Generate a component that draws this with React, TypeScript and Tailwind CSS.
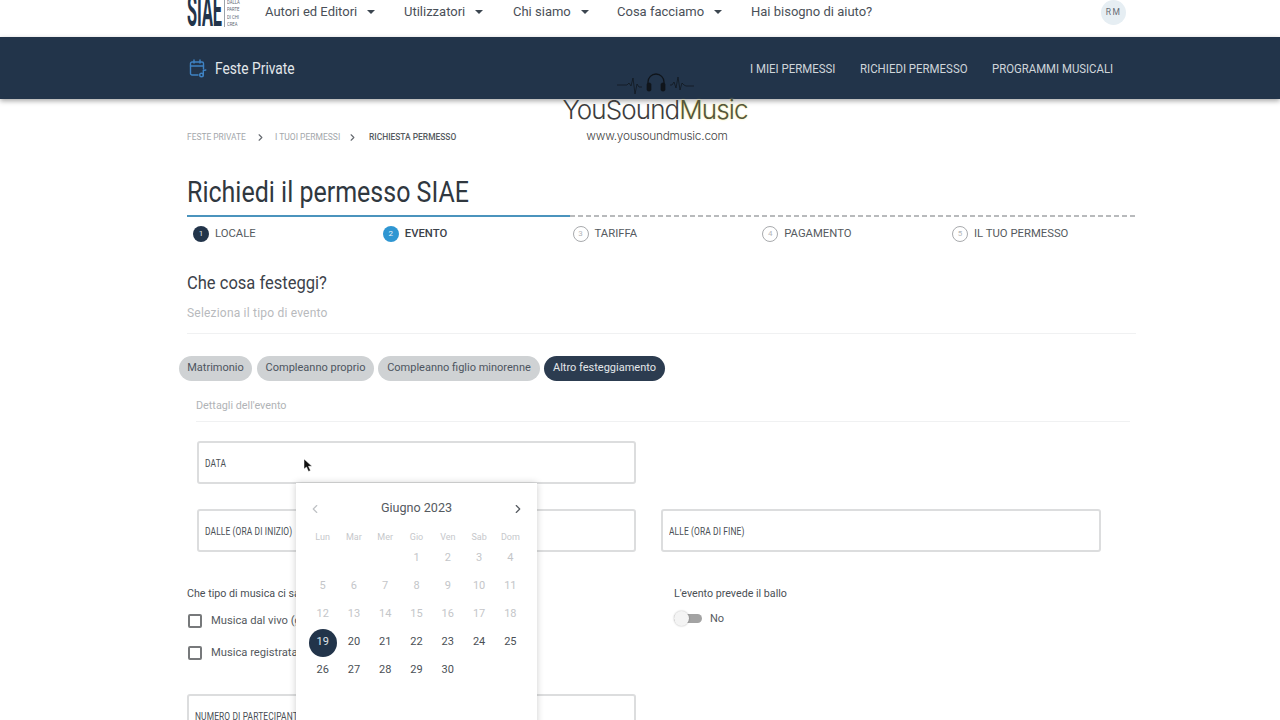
import React from "react";
import { ChevronLeft, ChevronRight } from "lucide-react";

const roboto = "font-['Roboto','Liberation_Sans',sans-serif]";

const topLinks = [
  { label: "Autori ed Editori", w: "w-[139px]" },
  { label: "Utilizzatori", w: "w-[109px]" },
  { label: "Chi siamo", w: "w-[104px]" },
  { label: "Cosa facciamo", w: "w-[134px]" },
];

const steps = [
  { n: 1, label: "LOCALE", state: "done" },
  { n: 2, label: "EVENTO", state: "active" },
  { n: 3, label: "TARIFFA", state: "todo" },
  { n: 4, label: "PAGAMENTO", state: "todo" },
  { n: 5, label: "IL TUO PERMESSO", state: "todo" },
];

const chips = [
  { label: "Matrimonio", w: "mr-[1px] w-[73px]" },
  { label: "Compleanno proprio", w: "w-[117px]" },
  { label: "Compleanno figlio minorenne", w: "w-[162px]" },
];

const dayNames = ["Lun", "Mar", "Mer", "Gio", "Ven", "Sab", "Dom"];
const days: (number | null)[] = [null, null, null, ...Array.from({ length: 30 }, (_, i) => i + 1)];

function Narrow({ children, className = "" }: { children: React.ReactNode; className?: string }) {
  // Roboto Condensed is not installed, so the wide face is squeezed from its left edge
  return <span className={`inline-block origin-left whitespace-nowrap ${className}`}>{children}</span>;
}

function Caret() {
  return <span className="ml-[10px] inline-block h-0 w-0 border-x-[4px] border-t-[4px] border-x-transparent border-t-[#3c4650]" />;
}

function Field({ label, className = "" }: { label: string; className?: string }) {
  return (
    <div className={`flex h-[43px] items-center rounded-[3px] border-2 border-[#dcddde] bg-white pl-[6px] pt-[1px] text-[10px] text-[#4a4f55] ${className}`}>
      <Narrow className="scale-x-[0.84] tracking-[0.15px]">{label}</Narrow>
    </div>
  );
}

function Check({ label }: { label: string }) {
  return (
    <div className="flex h-[15px] items-center">
      <span className="h-[14px] w-[14px] rounded-[2px] border-2 border-[#77797b] bg-white" />
      <span className="ml-[9px] mt-[1px] text-[11.200px] text-[#555a60]">{label}</span>
    </div>
  );
}

function Calendar() {
  return (
    <div className="absolute left-[296px] top-[483px] h-[260px] w-[241px] bg-white px-[11px] pt-[14px] shadow-[0_0_7px_rgba(0,0,0,0.2)]">
      <div className="flex h-[22px] items-center justify-between px-[1px]">
        <ChevronLeft className="mt-[2px] h-[14px] w-[14px] text-[#bfc2c5]" />
        <span className="text-[12.600px] text-[#555a60]">Giugno 2023</span>
        <ChevronRight className="mt-[2px] h-[14px] w-[14px] text-[#555a60]" />
      </div>
      <div className="mt-[12px] grid grid-cols-7 text-center text-[9px] text-[#c6c8cb]">
        {dayNames.map((d) => (
          <span key={d}>{d}</span>
        ))}
      </div>
      <div className="grid grid-cols-7 text-center text-[11px]">
        {days.map((d, i) => (
          <div key={i} className="flex h-[28px] items-center justify-center">
            {d === 19 ? (
              <span className="flex h-[28px] w-[28px] items-center justify-center rounded-full bg-[#22344a] text-[#dfe3e8]">19</span>
            ) : d === null ? null : (
              <span className={d < 19 ? "text-[#c4c6c9]" : "text-[#4a4f55]"}>{d}</span>
            )}
          </div>
        ))}
      </div>
    </div>
  );
}

function Watermark() {
  return (
    <div className="absolute left-[539px] top-[72px] flex w-[232px] flex-col items-center">
      <svg className="ml-[2px]" width="78" height="26" viewBox="0 0 78 26" fill="none" stroke="#10151b" strokeWidth="0.7">
        <path d="M0 13h10l2-2 2 3 2-8 2 16 2-10 2 3h3M53 13h2l2-3 2 6 2-11 2 13 2-7 2 2 2 1h8" />
        <path d="M31 12v-2a8 8 0 0 1 16 0v2" strokeWidth="1.3" />
        <rect x="30" y="11" width="4" height="8" rx="1.500" fill="#10151b" />
        <rect x="44" y="11" width="4" height="8" rx="1.500" fill="#10151b" />
      </svg>
      <div className="-mt-[2px] whitespace-nowrap font-['Inter',sans-serif] text-[26px] font-light leading-[28px] tracking-[-0.9px] text-[#3d3d3d]">
        YouSound<span className="text-[#55553a] [text-shadow:0_0_2px_#e8e27a]">Music</span>
      </div>
      <div className="ml-[4px] mt-[5px] whitespace-nowrap font-['Inter',sans-serif] text-[11.800px] font-light leading-[14px] tracking-[-0.2px] text-[#444]">
        www.yousoundmusic.com
      </div>
    </div>
  );
}

function Cursor() {
  return (
    <svg className="absolute left-[303px] top-[458px]" width="10" height="15" viewBox="0 0 10 15">
      <path d="M1 1v10l2.500-2 2 4.500 2-1-2-4.200H9z" fill="#111" stroke="#fff" strokeWidth="0.5" />
    </svg>
  );
}

function PartyIcon() {
  return (
    <svg width="18" height="19" viewBox="0 0 18 19" fill="none" stroke="#3f83c4" strokeWidth="1.4" strokeLinecap="round">
      <path d="M9 16H3a1.500 1.500 0 0 1-1.500-1.500v-10A1.500 1.500 0 0 1 3 3h10a1.500 1.500 0 0 1 1.500 1.500V10" />
      <path d="M1.500 7h13M5 1v3M11 1v3" />
      <circle cx="12.500" cy="16" r="1.800" />
      <path d="M14.300 16v-4.500l2.500 -.5" />
    </svg>
  );
}

export default function App() {
  return (
    <div className={`relative h-[720px] w-[1280px] overflow-hidden bg-white ${roboto}`}>
      <header className="flex h-[37px] items-center bg-white pb-[13px] pl-[187px] pr-[154px]">
        <div className="flex w-[78px] items-start self-start">
          <span className="-mt-[6px] block h-[34px] w-[37px] origin-top-left scale-x-[0.37] whitespace-nowrap font-['Roboto'] text-[44px] font-bold leading-[34px] text-[#22344a]">
            SIAE
          </span>
          <div className="-mt-[2px] flex flex-col border-l border-[#9aa2aa] pl-[2px] text-[6px] leading-[7.300px] text-[#5a6570]">
            <Narrow className="scale-x-[0.7]">DALLA</Narrow>
            <Narrow className="scale-x-[0.7]">PARTE</Narrow>
            <Narrow className="scale-x-[0.7]">DI CHI</Narrow>
            <Narrow className="scale-x-[0.7]">CREA</Narrow>
          </div>
        </div>
        {topLinks.map((l) => (
          <div key={l.label} className={`flex items-center text-[13px] text-[#4a5058] ${l.w}`}>
            {l.label}
            <Caret />
          </div>
        ))}
        <span className="text-[13px] text-[#4a5058]">Hai bisogno di aiuto?</span>
        <span className="ml-auto flex h-[25px] w-[25px] items-center justify-center rounded-full bg-[#e6eef3] text-[8.500px] tracking-[1.500px] text-[#666c74]">
          RM
        </span>
      </header>

      <nav className="flex h-[62px] items-center bg-[#22344a] pl-[189px] pr-[167px] pt-[1px] shadow-[0_2px_5px_rgba(0,0,0,0.35)]">
        <PartyIcon />
        <span className="ml-[8px] w-[120px] text-[16px] text-[#e3e7ea]">
          <Narrow className="scale-x-[0.86]">Feste Private</Narrow>
        </span>
        <div className="ml-auto flex text-[13px] text-[#cfd5da]">
          <span className="w-[110px]"><Narrow className="scale-x-[0.88]">I MIEI PERMESSI</Narrow></span>
          <span className="w-[132px]"><Narrow className="scale-x-[0.88]">RICHIEDI PERMESSO</Narrow></span>
          <span className="w-[121px]"><Narrow className="scale-x-[0.875]">PROGRAMMI MUSICALI</Narrow></span>
        </div>
      </nav>

      <main className="pl-[187px] pr-[144px]">
        <div className="mt-[31px] flex h-[14px] items-center text-[9.500px] text-[#a3a7ab]">
          <span className="w-[68px]"><Narrow className="scale-x-[0.885]">FESTE PRIVATE</Narrow></span>
          <ChevronRight className="h-[11px] w-[11px] text-[#666a70]" strokeWidth={2.500} />
          <span className="ml-[9px] w-[72px]"><Narrow className="scale-x-[0.895]">I TUOI PERMESSI</Narrow></span>
          <ChevronRight className="h-[11px] w-[11px] text-[#666a70]" strokeWidth={2.500} />
          <span className="ml-[11px] font-medium text-[#555a60]"><Narrow className="scale-x-[0.885]">RICHIESTA PERMESSO</Narrow></span>
        </div>

        <h1 className="mt-[28px] h-[40px] text-[29px] leading-[40px] text-[#30383f]">
          <Narrow className="scale-x-[0.862]">Richiedi il permesso SIAE</Narrow>
        </h1>

        <div className="mt-[3px] flex h-[2px] items-center">
          <div className="h-[2px] w-[383px] bg-[#4b94bd]" />
          <div className="h-[1.500px] flex-1 bg-[repeating-linear-gradient(90deg,#b8babc_0,#b8babc_5px,transparent_5px,transparent_8px)]" />
        </div>

        <div className="mt-[9px] grid h-[16px] grid-cols-[repeat(5,189.750px)] pl-[6px] text-[11.300px]">
          {steps.map((s) => (
            <div key={s.n} className="flex items-center">
              <span
                className={
                  s.state === "done"
                    ? "flex h-[16px] w-[16px] items-center justify-center rounded-full bg-[#22344a] text-[8px] text-[#dfe3e8]"
                    : s.state === "active"
                      ? "flex h-[16px] w-[16px] items-center justify-center rounded-full bg-[#2f96d2] text-[8px] text-[#e8f3fa]"
                      : "flex h-[16px] w-[16px] items-center justify-center rounded-full border border-[#a8aaad] text-[8px] text-[#b5b7ba]"
                }
              >
                {s.n}
              </span>
              <span className={s.state === "active" ? "ml-[6px] font-medium text-[#3c424a]" : "ml-[6px] text-[#555a60]"}>
                {s.label}
              </span>
            </div>
          ))}
        </div>

        <h2 className="mt-[28px] h-[26px] text-[19px] leading-[26px] text-[#3c424a]">
          <Narrow className="scale-x-[0.87]">Che cosa festeggi?</Narrow>
        </h2>
        <p className="mt-[8px] text-[12px] leading-[18px] tracking-[0.2px] text-[#b8babd]">Seleziona il tipo di evento</p>
        <div className="mt-[11px] h-px bg-[#f0f1f2]" />

        <div className="-ml-[8px] mt-[22px] flex gap-[4px] text-[11px]">
          {chips.map((c) => (
            <span key={c.label} className={`flex h-[25px] items-center justify-center rounded-full bg-[#cfd2d4] text-[#4d5560] ${c.w}`}>
              {c.label}
            </span>
          ))}
          <span className="flex h-[25px] w-[121px] items-center justify-center rounded-full bg-[#2c3c50] text-[#e3e7ea]">
            Altro festeggiamento
          </span>
        </div>

        <section className="ml-[9px] mr-[6px]">
          <p className="mt-[18px] text-[10.800px] leading-[14px] text-[#b0b3b6]">Dettagli dell'evento</p>
          <div className="mt-[8px] h-px bg-[#f0f1f2]" />
          <Field label="DATA" className="ml-[1px] mt-[19px] w-[439px]" />
          <div className="ml-[1px] mt-[25px] flex gap-[25px]">
            <Field label="DALLE (ORA DI INIZIO)" className="w-[439px]" />
            <Field label="ALLE (ORA DI FINE)" className="w-[440px]" />
          </div>
        </section>

        <div className="mt-[35px] flex">
          <div className="w-[487px]">
            <p className="text-[10.700px] leading-[14px] text-[#4a4f55]">Che tipo di musica ci sarà</p>
            <div className="ml-[1px] mt-[12px] flex flex-col gap-[17px]">
              <Check label="Musica dal vivo (gruppo)" />
              <Check label="Musica registrata" />
            </div>
          </div>
          <div>
            <p className="text-[10.700px] leading-[14px] text-[#4a4f55]">L'evento prevede il ballo</p>
            <div className="mt-[9px] flex items-center">
              <span className="relative h-[9px] w-[28px] rounded-full bg-[#a3a3a3]">
                <span className="absolute -top-[3px] left-0 h-[15px] w-[15px] rounded-full bg-[#f4f4f4] shadow-[0_0_2px_rgba(0,0,0,0.3)]" />
              </span>
              <span className="ml-[8px] mt-[1px] text-[11px] text-[#555a60]">No</span>
            </div>
          </div>
        </div>

        <Field label="NUMERO DI PARTECIPANTI" className="mt-[34px] w-[449px]" />
      </main>

      <Cursor />
      <Calendar />
      <Watermark />
    </div>
  );
}
